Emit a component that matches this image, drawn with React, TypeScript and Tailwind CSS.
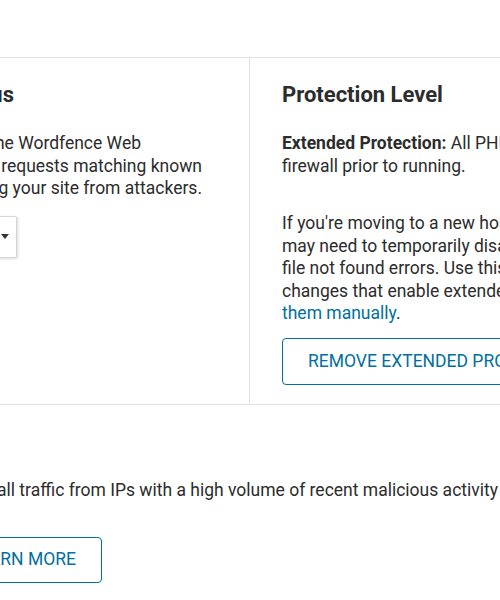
import React from "react";

function EndLine({ children, className = "" }: { children: React.ReactNode; className?: string }) {
  return (
    <div className={"flex justify-end " + className}>
      <span className="shrink-0 whitespace-nowrap">{children}</span>
    </div>
  );
}

export default function App() {
  return (
    <div
      className="w-[500px] h-[600px] overflow-hidden bg-white text-[#2c2c2c]"
      style={{ fontFamily: "Roboto, 'Noto Sans', Arial, sans-serif" }}
    >
      <div className="h-[57px]" />
      <div className="flex h-[348px] border-t border-b border-[#e2e2e2]">
        {/* left column: firewall status */}
        <div className="w-[250px] shrink-0 overflow-hidden border-r border-[#e2e2e2] pt-[23px]">
          <EndLine className="pr-[235px] text-[22px] leading-[28px] font-bold">
            Web Application Firewall Status
          </EndLine>
          <div className="mt-[23px] text-[17.5px] leading-[22.5px]">
            <EndLine className="pr-[108px]">
              <strong>Enabled and Protecting:</strong> In this mode, the Wordfence Web
            </EndLine>
            <EndLine className="pr-[47px]">
              Application Firewall is actively blocking requests matching known
            </EndLine>
            <EndLine className="pr-[47px]">
              attack patterns and is actively protecting your site from attackers.
            </EndLine>
          </div>
          <div className="mt-[16px] flex justify-end pr-[232px]">
            <div className="flex h-[42px] w-[300px] shrink-0 items-center justify-between rounded-[2px] border border-[#d6d6d6] bg-white pl-3 pr-[7px] text-[17.5px] shadow-[1px_1px_3px_rgba(0,0,0,0.15)]">
              <span>Enabled and Protecting</span>
              <span className="h-0 w-0 border-x-[4px] border-t-[5px] border-x-transparent border-t-[#333]" />
            </div>
          </div>
        </div>

        {/* right column: protection level */}
        <div className="min-w-0 flex-1 overflow-hidden pl-[32px] pt-[23px]">
          <h2 className="whitespace-nowrap text-[22px] leading-[28px] font-bold">Protection Level</h2>
          <div className="mt-[23px] text-[17.5px] leading-[22.5px] whitespace-nowrap">
            <p>
              <strong>Extended Protection:</strong> All PHP requests will be processed by the
              <br />
              firewall prior to running.
            </p>
            <p className="mt-[35px]">
              If you're moving to a new host or a new installation location, you
              <br />
              may need to temporarily disable extended protection to avoid any
              <br />
              file not found errors. Use this action to remove the configuration
              <br />
              changes that enable extended protection mode or you can{" "}
              <a className="text-[#00709e]">remove</a>
              <br />
              <a className="text-[#00709e]">them manually</a>.
            </p>
          </div>
          <button className="mt-[13px] h-[47px] shrink-0 whitespace-nowrap rounded-[4px] border border-[#00709e] bg-white px-[25px] text-[17.5px] uppercase text-[#00709e]">
            Remove Extended Protection
          </button>
        </div>
      </div>

      {/* bottom section: real-time IP blocklist */}
      <div className="pt-[74px]">
        <div className="-ml-[3px] whitespace-nowrap text-[17.5px] leading-[22.5px]">
          all traffic from IPs with a high volume of recent malicious activity (Premium)
        </div>
        <div className="mt-[35px] flex w-[102px] justify-end">
          <button className="h-[46px] shrink-0 whitespace-nowrap rounded-[4px] border border-[#00709e] bg-white px-[25px] text-[17.5px] uppercase text-[#00709e]">
            Learn More
          </button>
        </div>
      </div>
    </div>
  );
}
